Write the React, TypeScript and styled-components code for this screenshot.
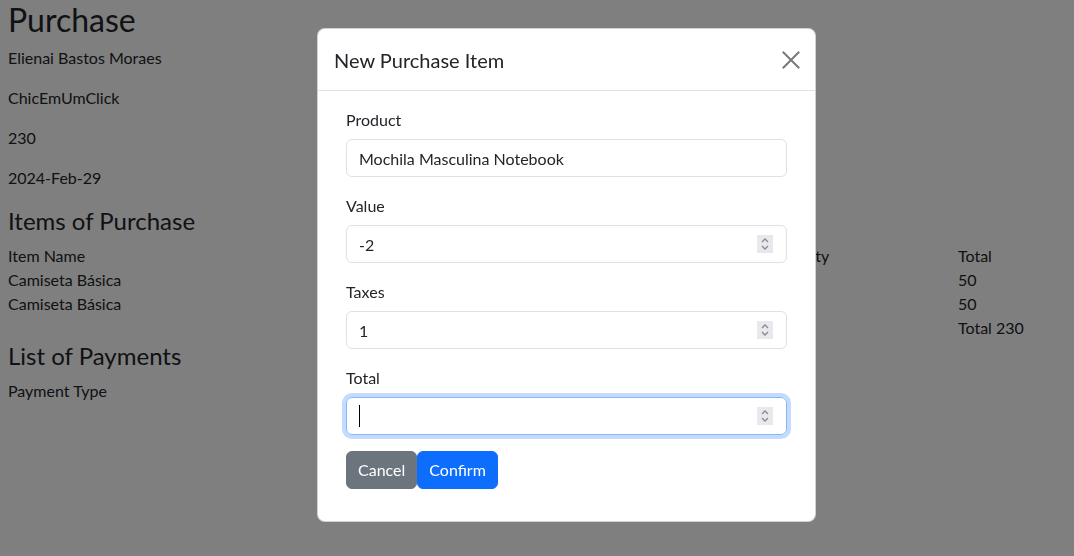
import React from "react";
import styled, { createGlobalStyle } from "styled-components";

const Global = createGlobalStyle`
  html, body { margin: 0; padding: 0; background: #fff; }
  body {
    font-family: Lato, "Noto Sans", "Liberation Sans", sans-serif;
    font-size: 16px;
    line-height: 1.5;
    color: #212529;
    overflow: hidden;
  }
  * { box-sizing: border-box; }
`;

const Page = styled.main`
  padding: 0 8px;
  width: 1074px;
  height: 556px;
`;

const Title = styled.h1`
  margin: 0 0 8px;
  padding-top: 2px;
  font-size: 32px;
  font-weight: 400;
  line-height: 36.4px;
`;

const SubTitle = styled.h4`
  margin: 0 0 8px;
  padding-top: 1px;
  font-size: 24px;
  font-weight: 400;
  line-height: 1.2;
`;

const Para = styled.p`
  margin: 0 0 16px;
`;

const Table = styled.div<{ $cols: string }>`
  display: grid;
  grid-template-columns: ${(p) => p.$cols};
  margin-bottom: 1px;
`;

const Cell = styled.div`
  line-height: 24px;
  min-height: 24px;
  white-space: nowrap;
`;

const Backdrop = styled.div`
  position: fixed;
  inset: 0;
  background: rgba(0, 0, 0, 0.5);
  display: flex;
  align-items: flex-start;
  padding: 28px 0 0 317px;
`;

const Dialog = styled.div`
  width: 499px;
  background: #fff;
  border: 1px solid rgba(0, 0, 0, 0.175);
  border-radius: 8px;
  display: flex;
  flex-direction: column;
`;

const Header = styled.div`
  display: flex;
  align-items: center;
  justify-content: space-between;
  padding: 16px 16px 15px 16px;
  border-bottom: 1px solid #dee2e6;
`;

const HeaderTitle = styled.h5`
  margin: 0;
  font-size: 20px;
  font-weight: 400;
  line-height: 30px;
`;

const CloseBtn = styled.button`
  border: 0;
  background: transparent;
  padding: 0;
  width: 24px;
  height: 24px;
  display: flex;
  align-items: center;
  justify-content: center;
  margin-right: -4px;
`;

const Body = styled.div`
  padding: 16px 16px 16px;
`;

const Form = styled.form`
  padding: 0 12px;
  display: flex;
  flex-direction: column;
`;

const Group = styled.div`
  margin-bottom: 16px;
`;

const Label = styled.label`
  display: block;
  margin-bottom: 8px;
  padding-top: 2px;
  line-height: 22px;
`;

const Field = styled.div<{ $focus?: boolean }>`
  position: relative;
  height: 38px;
  border: 1px solid ${(p) => (p.$focus ? "#86b7fe" : "#dee2e6")};
  border-radius: 6px;
  box-shadow: ${(p) => (p.$focus ? "0 0 0 4px rgba(13,110,253,0.25)" : "none")};
  display: flex;
  align-items: center;
`;

const Input = styled.input`
  border: 0;
  outline: none;
  background: transparent;
  width: 100%;
  height: 100%;
  padding: 6px 12px;
  font: inherit;
  color: #212529;
`;

const Spinner = styled.span`
  position: absolute;
  right: 13px;
  top: 9px;
  width: 16px;
  height: 18px;
  background: #e9e9ed;
  display: flex;
  align-items: center;
  justify-content: center;
`;

const Caret = styled.span`
  position: absolute;
  left: 12px;
  top: 7px;
  width: 1px;
  height: 22px;
  background: #000;
`;

const Actions = styled.div`
  display: flex;
  margin-bottom: 16px;
`;

const Button = styled.button<{ $variant: "primary" | "secondary" }>`
  height: 38px;
  padding: 6px 11px;
  border: 1px solid ${(p) => (p.$variant === "primary" ? "#0d6efd" : "#6c757d")};
  background: ${(p) => (p.$variant === "primary" ? "#0d6efd" : "#6c757d")};
  color: #fff;
  border-radius: 6px;
  font: inherit;
  line-height: 24px;
`;

const SpinIcon = () => (
  <svg width="10" height="14" viewBox="0 0 10 14" fill="none" stroke="#8a8a8e" strokeWidth="1.3">
    <path d="M2 5 L5 2 L8 5" />
    <path d="M2 9 L5 12 L8 9" />
  </svg>
);

const NumberField = ({ value, focus }: { value: string; focus?: boolean }) => (
  <Field $focus={focus}>
    <Input readOnly value={value} />
    {focus && <Caret />}
    <Spinner>
      <SpinIcon />
    </Spinner>
  </Field>
);

const cols = "330px 240px 189px 191px 1fr";

const items = [
  ["Item Name", "", "", "Quantity", "Total"],
  ["Camiseta Básica", "", "", "", "50"],
  ["Camiseta Básica", "", "", "", "50"],
  ["", "", "", "", "Total 230"],
];

export default function App() {
  return (
    <>
      <Global />
      <Page>
        <Title>Purchase</Title>
        <Para>Elienai Bastos Moraes</Para>
        <Para>ChicEmUmClick</Para>
        <Para>230</Para>
        <Para>2024-Feb-29</Para>
        <SubTitle>Items of Purchase</SubTitle>
        <Table $cols={cols}>
          {items.flatMap((row, r) => row.map((c, i) => <Cell key={`${r}-${i}`}>{c}</Cell>))}
        </Table>
        <SubTitle>List of Payments</SubTitle>
        <Table $cols={cols}>
          <Cell>Payment Type</Cell>
        </Table>
      </Page>
      <Backdrop>
        <Dialog>
          <Header>
            <HeaderTitle>New Purchase Item</HeaderTitle>
            <CloseBtn aria-label="Close">
              <svg width="18" height="18" viewBox="0 0 18 18" stroke="#7a7a7a" strokeWidth="2" strokeLinecap="square">
                <path d="M1.5 1.5 L16.5 16.5 M16.5 1.5 L1.5 16.5" />
              </svg>
            </CloseBtn>
          </Header>
          <Body>
            <Form>
              <Group>
                <Label>Product</Label>
                <Field>
                  <Input readOnly value="Mochila Masculina Notebook" />
                </Field>
              </Group>
              <Group>
                <Label>Value</Label>
                <NumberField value="-2" />
              </Group>
              <Group>
                <Label>Taxes</Label>
                <NumberField value="1" />
              </Group>
              <Group>
                <Label>Total</Label>
                <NumberField value="" focus />
              </Group>
              <Actions>
                <Button type="button" $variant="secondary">Cancel</Button>
                <Button type="button" $variant="primary">Confirm</Button>
              </Actions>
            </Form>
          </Body>
        </Dialog>
      </Backdrop>
    </>
  );
}
